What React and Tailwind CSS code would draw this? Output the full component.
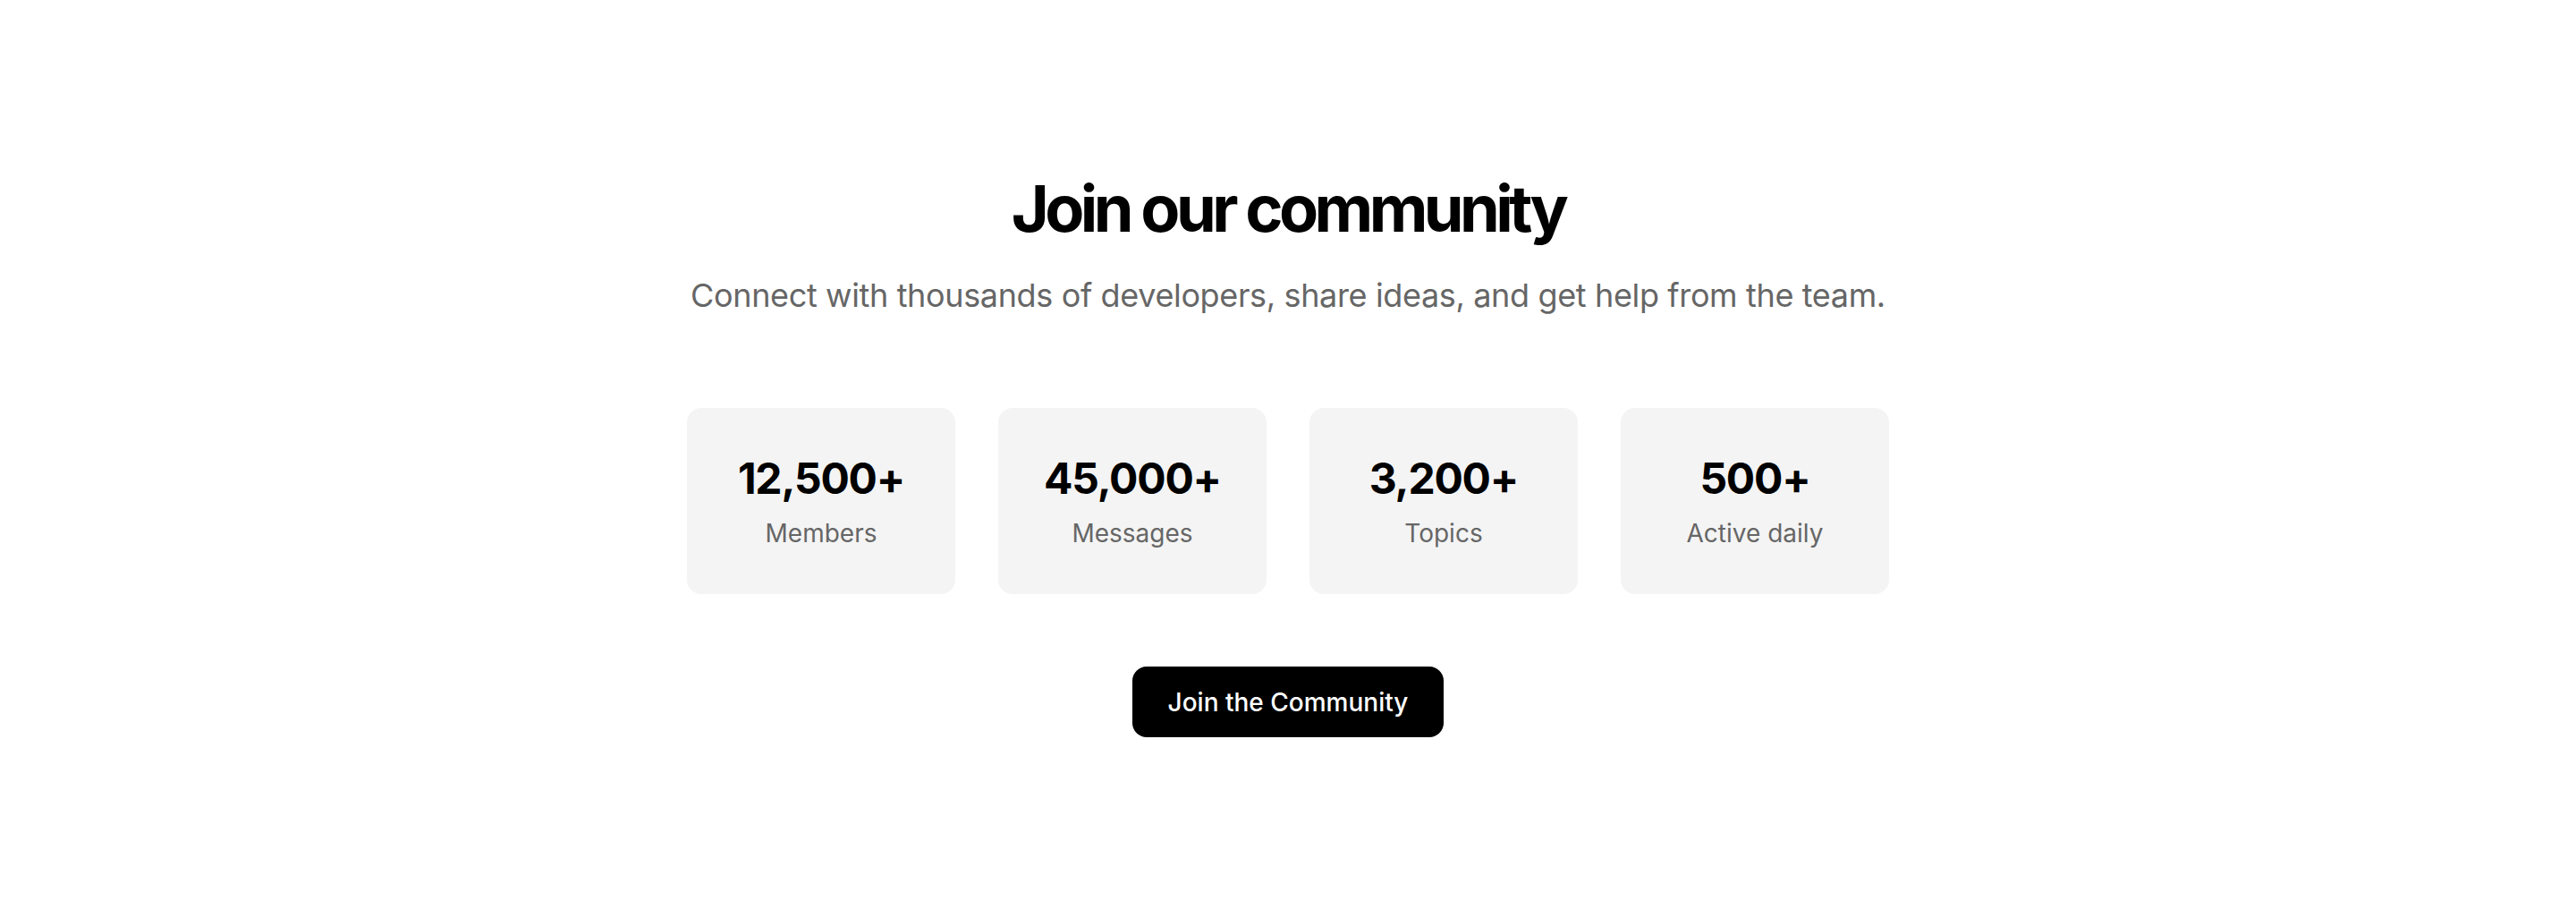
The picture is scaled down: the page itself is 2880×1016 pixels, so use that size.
import React from "react";

const stats = [
  { value: "12,500+", label: "Members" },
  { value: "45,000+", label: "Messages" },
  { value: "3,200+", label: "Topics" },
  { value: "500+", label: "Active daily" },
];

export default function App() {
  return (
    <div
      className="w-full min-h-screen bg-white flex flex-col items-center pt-[197px] pb-[193px]"
      style={{ fontFamily: "Inter, 'Noto Sans', sans-serif" }}
    >
      <h1 className="text-[72px] leading-none font-bold tracking-[-0.064em] text-black">
        Join our community
      </h1>
      <p className="mt-[43px] text-[36px] leading-none tracking-[-0.01em] text-[#666666]">
        Connect with thousands of developers, share ideas, and get help from the team.
      </p>
      <div className="mt-[108px] grid grid-cols-4 gap-[48px]">
        {stats.map((s) => (
          <div
            key={s.label}
            className="w-[300px] h-[208px] rounded-2xl bg-[#f4f4f4] flex flex-col items-center justify-center"
          >
            <div className="text-[48px] leading-none font-bold tracking-tight text-black">
              {s.value}
            </div>
            <div className="mt-[23px] text-[28px] leading-none text-[#666666]">
              {s.label}
            </div>
          </div>
        ))}
      </div>
      <button className="mt-[81px] h-[79px] px-[40px] rounded-2xl bg-black text-white text-[28px] leading-none font-medium flex items-center justify-center">
        Join the Community
      </button>
    </div>
  );
}
